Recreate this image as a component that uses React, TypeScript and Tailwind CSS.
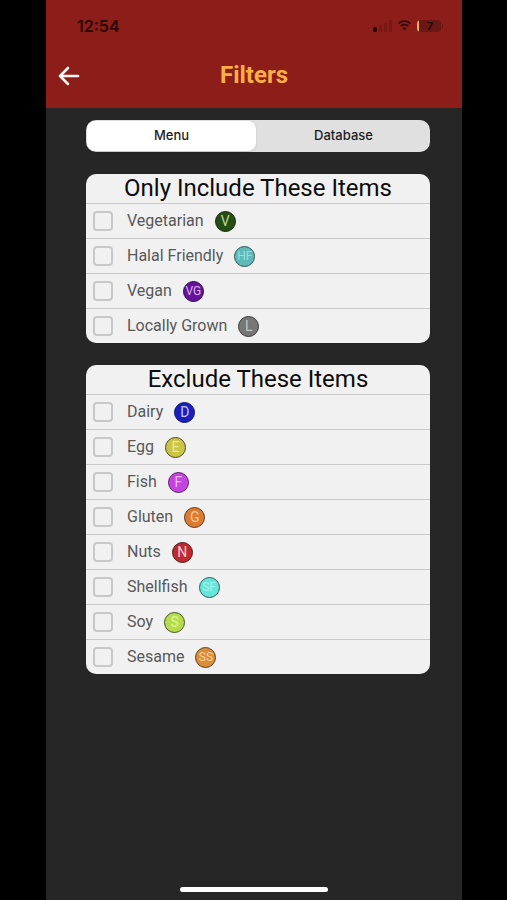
import { useState } from "react";

type Item = { name: string; code: string; color: string };

const includeItems: Item[] = [
  { name: "Vegetarian", code: "V", color: "border-[#12260c] bg-[#264d12] text-[#b5d69c]" },
  { name: "Halal Friendly", code: "HF", color: "border-[#2f5558] bg-[#5fbab8] text-[#93dfdf]" },
  { name: "Vegan", code: "VG", color: "border-[#2c0d4a] bg-[#66129d] text-[#dcb6f0]" },
  { name: "Locally Grown", code: "L", color: "border-[#383838] bg-[#777777] text-[#c4c4c4]" },
];

const excludeItems: Item[] = [
  { name: "Dairy", code: "D", color: "border-[#10145c] bg-[#1a20bd] text-[#c3c8fa]" },
  { name: "Egg", code: "E", color: "border-[#4c4a26] bg-[#cbc546] text-[#efea91]" },
  { name: "Fish", code: "F", color: "border-[#542663] bg-[#c643e0] text-[#f0b9f8]" },
  { name: "Gluten", code: "G", color: "border-[#5a3a22] bg-[#dc7a30] text-[#fbc998]" },
  { name: "Nuts", code: "N", color: "border-[#4e1a1d] bg-[#bd2a30] text-[#f8caca]" },
  { name: "Shellfish", code: "SF", color: "border-[#2e5a57] bg-[#66e6da] text-[#a0f5ee]" },
  { name: "Soy", code: "S", color: "border-[#45502a] bg-[#b4dc4c] text-[#e0f598]" },
  { name: "Sesame", code: "SS", color: "border-[#5a4025] bg-[#db8d38] text-[#fbd09a]" },
];

const tabs = ["Menu", "Database"];

function StatusBar() {
  return (
    <div className="flex h-[51px] items-center justify-between pl-[31px] pr-[19px] text-[#2a0606]">
      <span className="font-[Inter,sans-serif] text-base font-semibold">12:54</span>
      <div className="flex items-center gap-1.5">
        {/* Signal */}
        <svg width="19" height="12" viewBox="0 0 19 12" fill="currentColor" aria-hidden="true">
          <rect x="0" y="7" width="4" height="5" rx="1.5" />
          <rect x="6" y="5" width="3" height="7" rx="1" opacity="0.2" />
          <rect x="11" y="3" width="3" height="9" rx="1" opacity="0.2" />
          <rect x="16" y="0" width="3" height="12" rx="1" opacity="0.2" />
        </svg>
        {/* Wifi */}
        <svg width="13" height="11" viewBox="0 0 12 10" fill="none" stroke="currentColor" aria-hidden="true">
          <path d="M0.6 3.2C3.6 0.2 8.4 0.2 11.4 3.2" strokeWidth="1.6" />
          <path d="M2.6 5.6C4.5 3.7 7.5 3.7 9.4 5.6" strokeWidth="1.8" />
          <path d="M4.2 7.6C5.2 6.6 6.8 6.6 7.8 7.6L6 9.5Z" fill="currentColor" stroke="none" />
        </svg>
        {/* Battery */}
        <div className="flex items-center gap-px">
          <div className="flex h-3 w-6 items-center overflow-hidden rounded-sm bg-[#6b1713]">
            <span className="h-full w-0.5 bg-[#f3b04e]" />
            <span className="flex-1 text-center font-[Inter,sans-serif] text-[11px] leading-3 font-bold">7</span>
          </div>
          <span className="h-1 w-px bg-[#6b1713]" />
        </div>
      </div>
    </div>
  );
}

function FilterCard({ title, items }: { title: string; items: Item[] }) {
  return (
    <section className="overflow-hidden rounded-[10px] bg-[#f1f1f1]">
      <h2 className="h-[29px] text-center text-2xl leading-[29px] text-[#0c0c0c]">{title}</h2>
      <ul>
        {items.map((item) => (
          <li key={item.name} className="border-t border-[#c9c9ca]">
            <label className="flex h-[34px] items-center pl-[7px] text-[#58585a]">
              <input
                type="checkbox"
                className="size-5 appearance-none rounded border-2 border-[#c8c8c9] checked:border-[#8c1d18] checked:bg-[#8c1d18]"
              />
              <span className="ml-3.5 text-base">{item.name}</span>
              <span
                className={`ml-[11px] flex size-[21px] items-center justify-center rounded-full border ${
                  item.code.length > 1 ? "text-xs" : "text-sm"
                } ${item.color}`}
              >
                {item.code}
              </span>
            </label>
          </li>
        ))}
      </ul>
    </section>
  );
}

export default function App() {
  const [activeTab, setActiveTab] = useState("Menu");

  return (
    <div className="min-h-screen bg-black pl-[46px] pr-[45px] font-[Roboto,sans-serif]">
      <div className="flex min-h-screen flex-col bg-[#262626]">
        <header className="bg-[#8c1d18]">
          <StatusBar />
          <div className="grid h-[57px] grid-cols-[48px_1fr_48px] items-start">
            <button type="button" aria-label="Back" className="flex h-[50px] items-center pl-3">
              <svg
                width="22"
                height="20"
                viewBox="0 0 22 20"
                fill="none"
                stroke="#fdf3f3"
                strokeWidth="2.6"
                strokeLinecap="round"
                strokeLinejoin="round"
                aria-hidden="true"
              >
                <path d="M20 10H2M10 2L2 10L10 18" />
              </svg>
            </button>
            <h1 className="text-center text-2xl leading-12 font-bold text-[#f9ae46]">Filters</h1>
          </div>
        </header>

        <main className="flex flex-1 flex-col gap-[22px] pt-3 pr-8 pl-10">
          <div className="grid h-8 grid-cols-2 rounded-[10px] bg-[#e0e0e1] p-px" role="tablist">
            {tabs.map((tab) => (
              <button
                key={tab}
                type="button"
                role="tab"
                aria-selected={activeTab === tab}
                onClick={() => setActiveTab(tab)}
                className={`rounded-lg font-[Inter,sans-serif] text-[13px] font-medium text-[#1c1c1e] ${
                  activeTab === tab ? "mr-0.5 bg-white shadow-sm" : ""
                }`}
              >
                {tab}
              </button>
            ))}
          </div>

          <FilterCard title="Only Include These Items" items={includeItems} />
          <FilterCard title="Exclude These Items" items={excludeItems} />
        </main>

        {/* Home indicator */}
        <div className="mx-auto mb-2 h-[5px] w-[148px] rounded-full bg-white" />
      </div>
    </div>
  );
}
